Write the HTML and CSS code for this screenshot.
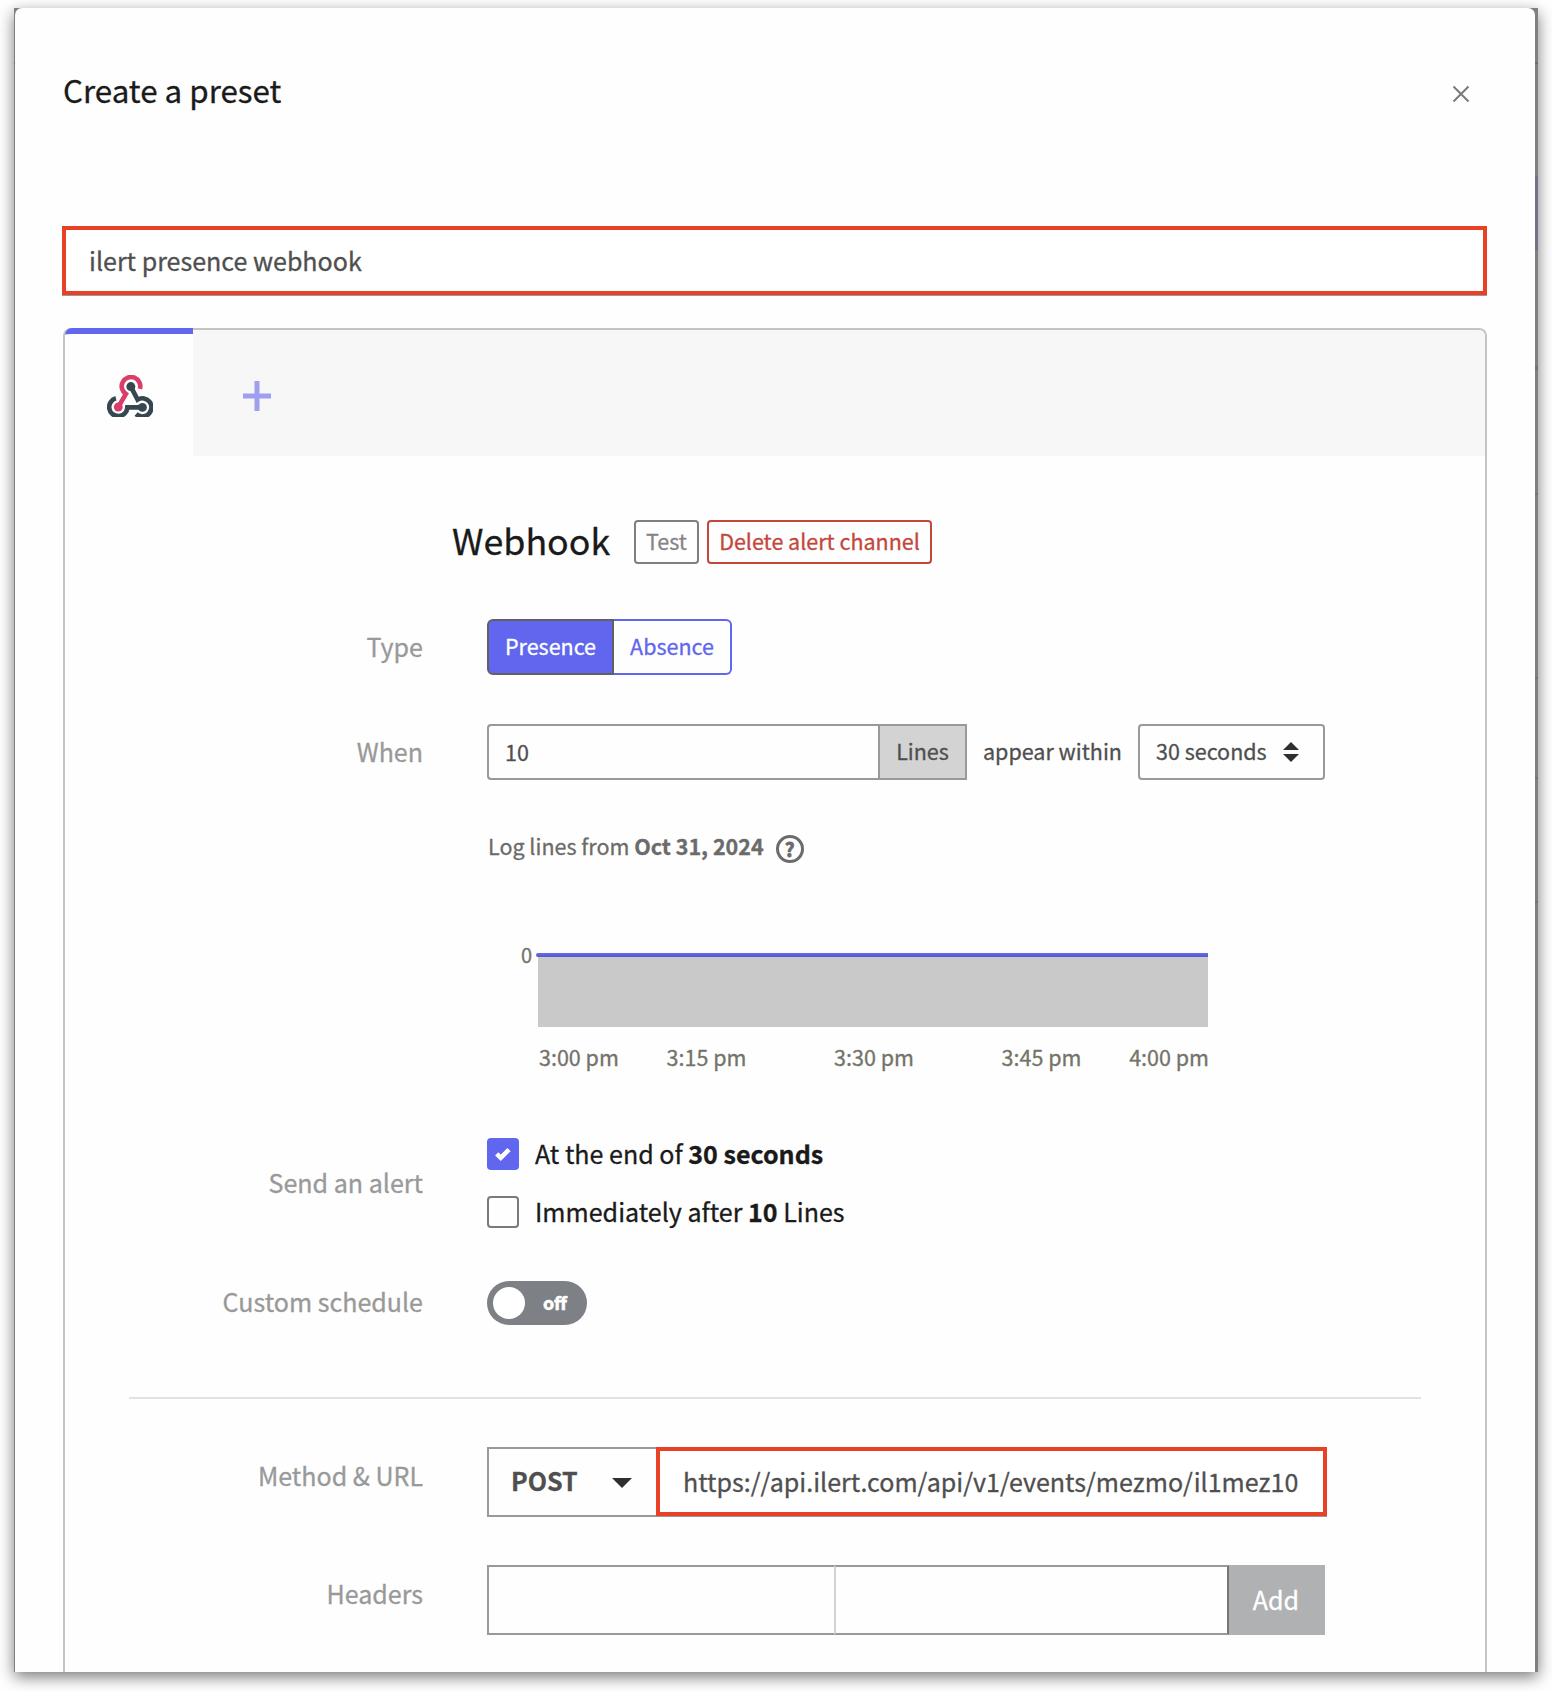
FILE: index.html
```html
<!DOCTYPE html>
<html lang="en">
<head>
<meta charset="utf-8">
<title>Create a preset</title>
<link rel="stylesheet" href="styles.css">
</head>
<body>
<div class="backdrop">
  <main class="modal">
    <header class="modal-header">
      <h1 class="modal-title">Create a preset</h1>
      <svg class="close" width="18" height="18" viewBox="0 0 18 18"><path d="M1.5 1.5 16.5 16.5M16.5 1.5 1.5 16.5"/></svg>
    </header>

    <div class="highlight name-input">ilert presence webhook</div>

    <section class="panel">
      <nav class="tabs">
        <div class="tab">
          <svg class="logo" width="46" height="42" viewBox="35 44 139 127">
            <path class="dark" d="M61.9 114.4A27.5 27.5 0 1 0 96.5 142H142"/>
            <path class="dark" d="M107 79 127.500 118.500A27.500 27.500 0 1 1 123 162"/>
            <path class="pink" d="M134.400 86A28 28 0 1 0 92 101.500L69 141"/>
            <circle class="fill-dark" cx="107" cy="79" r="13.500"/>
            <circle class="fill-dark" cx="142" cy="142" r="13.500"/>
            <circle class="fill-pink" cx="69" cy="141" r="13.500"/>
          </svg>
        </div>
        <div class="tab-add">
          <svg width="28" height="30" viewBox="0 0 28 30"><path d="M0 15H28M14 0V30"/></svg>
        </div>
      </nav>

      <div class="channel">
        <div class="channel-head">
          <h2 class="channel-title">Webhook</h2>
          <span class="btn">Test</span>
          <span class="btn btn-danger">Delete alert channel</span>
        </div>

        <div class="row row-type">
          <div class="label">Type</div>
          <div class="segmented">
            <span class="segment segment-active">Presence</span>
            <span class="segment">Absence</span>
          </div>
        </div>

        <div class="row row-when">
          <div class="label">When</div>
          <div class="when">
            <div class="count">10</div>
            <div class="unit">Lines</div>
            <div class="between">appear within</div>
            <div class="select">
              <span>30 seconds</span>
              <svg width="16" height="20" viewBox="0 0 16 20"><path d="M0 8 8 0 16 8ZM0 12H16L8 20Z"/></svg>
            </div>
          </div>
        </div>

        <div class="log">
          <span>Log lines from <b>Oct 31, 2024</b></span>
          <span class="help">?</span>
        </div>

        <div class="chart">
          <div class="axis-y">0</div>
          <div class="plot"><div class="series"></div></div>
          <div class="axis-x">
            <span>3:00 pm</span><span>3:15 pm</span><span>3:30 pm</span><span>3:45 pm</span><span>4:00 pm</span>
          </div>
        </div>

        <div class="row row-send">
          <div class="label">Send an alert</div>
          <div class="checks">
            <div class="check">
              <span class="box box-on"><svg width="16" height="14" viewBox="0 0 16 14"><path d="M1.700 6.800 5.800 10.800 14 2.600"/></svg></span>
              <span class="check-text">At the end of <b>30 seconds</b></span>
            </div>
            <div class="check">
              <span class="box"></span>
              <span class="check-text">Immediately after <b>10</b> Lines</span>
            </div>
          </div>
        </div>

        <div class="row row-schedule">
          <div class="label">Custom schedule</div>
          <div class="toggle"><span class="knob"></span><span class="toggle-text">off</span></div>
        </div>

        <hr class="divider">

        <div class="row row-url">
          <div class="label">Method &amp; URL</div>
          <div class="request">
            <div class="method">POST <svg width="20" height="10" viewBox="0 0 20 10"><path d="M0 0H20L10 10Z"/></svg></div>
            <div class="highlight url">https://api.ilert.com/api/v1/events/mezmo/il1mez10</div>
          </div>
        </div>

        <div class="row row-headers">
          <div class="label">Headers</div>
          <div class="headers">
            <div class="header-key"></div>
            <div class="header-value"></div>
            <div class="add">Add</div>
          </div>
        </div>
      </div>
    </section>
  </main>
</div>
</body>
</html>
```
FILE: styles.css
```css
* { box-sizing: border-box; }

body {
  margin: 0;
  height: 1691px;
  overflow: hidden;
  background: #fff;
  color: #1a1a1a;
  font-family: "Noto Sans CJK JP", "Noto Sans", sans-serif;
  font-size: 25.06px;
  line-height: 36px;
  padding: 8px 14px 0;
  -webkit-text-stroke: .3px;
}

.backdrop {
  height: 1664px;
  padding: 0 3px 0 1px;
  background:
    linear-gradient(#6d6d6d, #6d6d6d) 0 54px / 100% 2px no-repeat,
    linear-gradient(#737085, #737085) 100% 168px / 3px 74px no-repeat,
    linear-gradient(#747474, #747474) 100% 358px / 3px 4px no-repeat,
    linear-gradient(#747474, #747474) 100% 485px / 3px 2px no-repeat,
    linear-gradient(#747474, #747474) 100% 669px / 3px 2px no-repeat,
    linear-gradient(#747474, #747474) 100% 769px / 3px 2px no-repeat,
    linear-gradient(#747474, #747474) 100% 893px / 3px 2px no-repeat,
    #7f7f7f;
  box-shadow: 0 5px 15px rgba(0, 0, 0, .53);
}

.modal {
  height: 1664px;
  display: flex;
  flex-direction: column;
  background: #fefefe;
  border-radius: 7px 7px 0 0;
  padding: 61px 48px 0 47px;
  overflow: hidden;
}

.modal-header {
  display: flex;
  justify-content: space-between;
  height: 40px;
  margin: 0 17px 117px 1px;
}

.modal-title {
  margin: 0;
  font-size: 31.35px;
  font-weight: 400;
  line-height: 42px;
}

.close { margin-top: 16px; fill: none; stroke: #7a7a7a; stroke-width: 2; }

.highlight {
  height: 69px;
  border: 4px solid #e94126;
  box-shadow: 0 1px 0 #999;
  background: #fff;
  color: #4f4f4f;
  line-height: 61px;
  white-space: nowrap;
}

.name-input { flex: none; padding-left: 23px; }

.panel {
  flex: 1;
  min-height: 0;
  margin: 33px 0 0 1px;
  border: 2px solid #c4c4c4;
  border-bottom: 0;
  border-radius: 8px 8px 0 0;
}

.tabs {
  display: flex;
  height: 126px;
  background: #f7f7f7;
  border-radius: 6px 6px 0 0;
}

.tab {
  width: 128px;
  height: 128px;
  margin-top: -2px;
  padding: 41px 0 0 42px;
  border-top: 6px solid #6066ee;
  border-radius: 7px 0 0 0;
  background: #fefefe;
}

.logo { display: block; fill: none; stroke-width: 14; }
.dark { stroke: #37474f; }
.pink { stroke: #d93d68; }
.fill-dark { fill: #37474f; }
.fill-pink { fill: #d93d68; }

.tab-add { padding: 51px 0 0 50px; }
.tab-add svg { display: block; stroke: #9e9ff0; stroke-width: 5; }

.channel { padding: 64px 64px 0; }

.channel-head {
  display: flex;
  height: 44px;
  margin-left: 323px;
}

.channel-title {
  width: 158px;
  margin: -3px 24px 0 0;
  font-size: 35.8px;
  font-weight: 400;
  line-height: 44px;
}

.btn {
  width: 65px;
  height: 44px;
  margin-right: 8px;
  border: 2px solid #7f7f7f;
  border-radius: 4px;
  color: #858585;
  font-size: 21.5px;
  line-height: 37px;
  text-align: center;
}

.btn-danger { width: 225px; border-color: #c4473c; color: #c4473c; }

.row { display: flex; align-items: center; }

.label {
  width: 294px;
  margin-right: 64px;
  padding-bottom: 2px;
  color: #999;
  text-align: right;
}

.row-type { margin-top: 55px; }

.segmented {
  display: flex;
  height: 56px;
  font-size: 21.5px;
  line-height: 50px;
  text-align: center;
}

.segment {
  width: 118px;
  border: 2px solid #6066ee;
  border-left: 0;
  border-radius: 0 6px 6px 0;
  color: #6066ee;
}

.segment-active {
  width: 127px;
  border: 2px solid #616161;
  border-radius: 6px 0 0 6px;
  background: #6066ee;
  color: #fff;
}

.row-when { margin-top: 49px; }

.when {
  display: flex;
  height: 56px;
  color: #4f4f4f;
  font-size: 21.5px;
  line-height: 50px;
}

.count {
  width: 391px;
  padding-left: 16px;
  border: 2px solid #999;
  border-right: 0;
  border-radius: 4px 0 0 4px;
  line-height: 52px;
}

.unit {
  width: 89px;
  border: 2px solid #999;
  background: #d3d3d3;
  text-align: center;
}

.between { width: 171px; padding: 2px 0 0 16px; }

.select {
  display: flex;
  width: 187px;
  padding-left: 16px;
  border: 2px solid #999;
  border-radius: 4px;
}

.select svg { margin: 16px 0 0 16px; fill: #2f2f2f; }

.log {
  display: flex;
  height: 30px;
  margin: 51px 0 0 359px;
  color: #6b6b6b;
  font-size: 21.5px;
  line-height: 30px;
}

.help {
  width: 28px;
  height: 28px;
  margin: 4px 0 0 12px;
  border: 3px solid #6b6b6b;
  border-radius: 50%;
  font-size: 19px;
  font-weight: 700;
  line-height: 21px;
  text-align: center;
  -webkit-text-stroke: .8px;
}

.chart {
  display: grid;
  grid-template-columns: 47px 670px;
  margin: 92px 0 0 362px;
  color: #737369;
}

.axis-y { padding-right: 6px; font-size: 20px; line-height: 4px; text-align: right; }

.plot { height: 74px; background: #c9c9c9; }

.series {
  height: 4px;
  margin-left: -2px;
  border-radius: 2px 0 0 2px;
  background: linear-gradient(#6066ee 50%, #5a5fc8 50%);
}

.axis-x {
  grid-column: 2;
  display: grid;
  grid-template-columns: 1fr 2fr 2fr 2fr 1fr;
  margin: 15px -1px 0 1px;
  font-size: 21.5px;
  line-height: 30px;
  text-align: center;
}

.axis-x span:first-child { text-align: left; }
.axis-x span:last-child { text-align: right; }

.row-send { margin-top: 66px; }

.checks { display: grid; gap: 26px; }

.check { display: flex; height: 32px; }

.box {
  width: 32px;
  height: 32px;
  margin-right: 16px;
  border: 2px solid #7a7a7a;
  border-radius: 4px;
}

.box-on { padding: 9px 0 0 8px; border: 0; background: #6066ee; }
.box-on svg { display: block; fill: none; stroke: #fff; stroke-width: 4.6; }

.check-text { line-height: 30px; }

.row-schedule { margin-top: 53px; }
.row-schedule .label { padding-bottom: 4px; }

.toggle {
  display: flex;
  width: 100px;
  height: 44px;
  padding: 6px;
  border-radius: 22px;
  background: #7d8085;
}

.knob { width: 32px; height: 32px; border-radius: 50%; background: #fff; }

.toggle-text {
  margin-left: 18px;
  color: #fff;
  font-size: 17.9px;
  font-weight: 700;
  line-height: 30px;
  -webkit-text-stroke: .6px;
}

.divider { height: 2px; margin: 72px 0 0; border: 0; background: #e2e2e2; }

.row-url, .row-headers { margin-top: 48px; }
.row-url .label, .row-headers .label { padding-bottom: 14px; }

.request { display: flex; flex: none; height: 70px; }

.method {
  display: flex;
  width: 169px;
  padding-left: 22px;
  border: 2px solid #999;
  border-right: 0;
  color: #4f4f4f;
  font-weight: 700;
  line-height: 62px;
}

.method svg { margin: 29px 0 0 34px; fill: #2f2f2f; }

.url { width: 671px; padding-left: 23px; }

.headers { display: flex; height: 70px; }

.header-key { width: 347px; border: 2px solid #999; border-right: 0; }

.header-value {
  width: 395px;
  border: 2px solid #999;
  border-left-color: #d3d3d3;
  border-right-color: #74767a;
}

.add {
  width: 96px;
  padding-right: 2px;
  background: #b0b1b3;
  color: #fff;
  line-height: 68px;
  text-align: center;
}
```
